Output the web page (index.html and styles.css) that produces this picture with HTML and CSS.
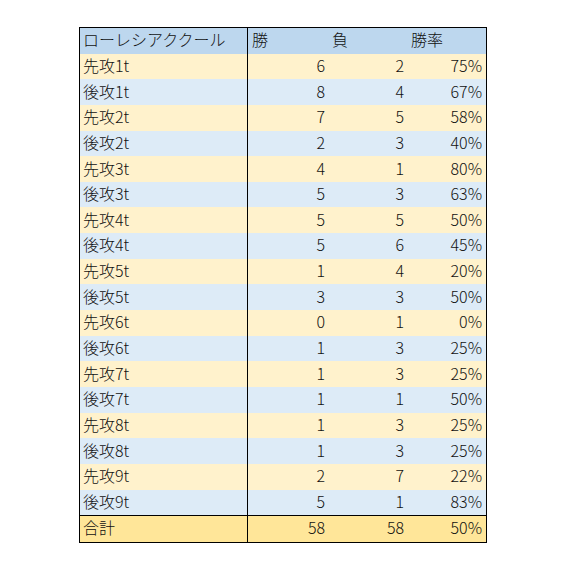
FILE: index.html
```html
<!DOCTYPE html>
<html lang="ja">
<head>
<meta charset="utf-8">
<title>ローレシアククール</title>
<link rel="stylesheet" href="styles.css">
</head>
<body>
<div class="sheet">
  <div class="row head">
    <div class="cell name">ローレシアククール</div>
    <div class="cell h h-win">勝</div>
    <div class="cell h h-lose">負</div>
    <div class="cell h h-rate">勝率</div>
  </div>
  <div class="row y"><div class="cell name">先攻1t</div><div class="cell num">6</div><div class="cell num">2</div><div class="cell num rate">75%</div></div>
  <div class="row b"><div class="cell name">後攻1t</div><div class="cell num">8</div><div class="cell num">4</div><div class="cell num rate">67%</div></div>
  <div class="row y"><div class="cell name">先攻2t</div><div class="cell num">7</div><div class="cell num">5</div><div class="cell num rate">58%</div></div>
  <div class="row b"><div class="cell name">後攻2t</div><div class="cell num">2</div><div class="cell num">3</div><div class="cell num rate">40%</div></div>
  <div class="row y"><div class="cell name">先攻3t</div><div class="cell num">4</div><div class="cell num">1</div><div class="cell num rate">80%</div></div>
  <div class="row b"><div class="cell name">後攻3t</div><div class="cell num">5</div><div class="cell num">3</div><div class="cell num rate">63%</div></div>
  <div class="row y"><div class="cell name">先攻4t</div><div class="cell num">5</div><div class="cell num">5</div><div class="cell num rate">50%</div></div>
  <div class="row b"><div class="cell name">後攻4t</div><div class="cell num">5</div><div class="cell num">6</div><div class="cell num rate">45%</div></div>
  <div class="row y"><div class="cell name">先攻5t</div><div class="cell num">1</div><div class="cell num">4</div><div class="cell num rate">20%</div></div>
  <div class="row b"><div class="cell name">後攻5t</div><div class="cell num">3</div><div class="cell num">3</div><div class="cell num rate">50%</div></div>
  <div class="row y"><div class="cell name">先攻6t</div><div class="cell num">0</div><div class="cell num">1</div><div class="cell num rate">0%</div></div>
  <div class="row b"><div class="cell name">後攻6t</div><div class="cell num">1</div><div class="cell num">3</div><div class="cell num rate">25%</div></div>
  <div class="row y"><div class="cell name">先攻7t</div><div class="cell num">1</div><div class="cell num">3</div><div class="cell num rate">25%</div></div>
  <div class="row b"><div class="cell name">後攻7t</div><div class="cell num">1</div><div class="cell num">1</div><div class="cell num rate">50%</div></div>
  <div class="row y"><div class="cell name">先攻8t</div><div class="cell num">1</div><div class="cell num">3</div><div class="cell num rate">25%</div></div>
  <div class="row b"><div class="cell name">後攻8t</div><div class="cell num">1</div><div class="cell num">3</div><div class="cell num rate">25%</div></div>
  <div class="row y"><div class="cell name">先攻9t</div><div class="cell num">2</div><div class="cell num">7</div><div class="cell num rate">22%</div></div>
  <div class="row b"><div class="cell name">後攻9t</div><div class="cell num">5</div><div class="cell num">1</div><div class="cell num rate">83%</div></div>
  <div class="row total"><div class="cell name">合計</div><div class="cell num">58</div><div class="cell num">58</div><div class="cell num rate">50%</div></div>
</div>
</body>
</html>
```

FILE: styles.css
```css
html, body {
  margin: 0;
  padding: 0;
  background: #ffffff;
}

body {
  font-family: "Noto Sans CJK JP", "Noto Sans", sans-serif;
  font-size: 16px;
  font-weight: 300;
  color: #111111;
}

.sheet {
  margin: 27px 0 0 79px;
  width: 408px;
  border: 1px solid #000000;
  box-sizing: border-box;
}

.row {
  display: grid;
  grid-template-columns: 168px 79px 79px 1fr;
  height: 25.65px;
}

.head { background: #bdd7ee; }
.y { background: #fff2cc; }
.b { background: #ddebf7; }
.total {
  background: #ffe699;
  border-top: 1px solid #000000;
}

.cell {
  display: flex;
  align-items: center;
  line-height: 1;
  padding-bottom: 3px;
  box-sizing: border-box;
  white-space: nowrap;
}

.name {
  border-right: 1px solid #000000;
  padding-left: 3px;
}

.num {
  justify-content: flex-end;
  padding-right: 2px;
}

.rate {
  padding-right: 4px;
}

.h-win { padding-left: 4px; }
.h-lose { padding-left: 5px; }
.h-rate { padding-left: 5px; }
```
